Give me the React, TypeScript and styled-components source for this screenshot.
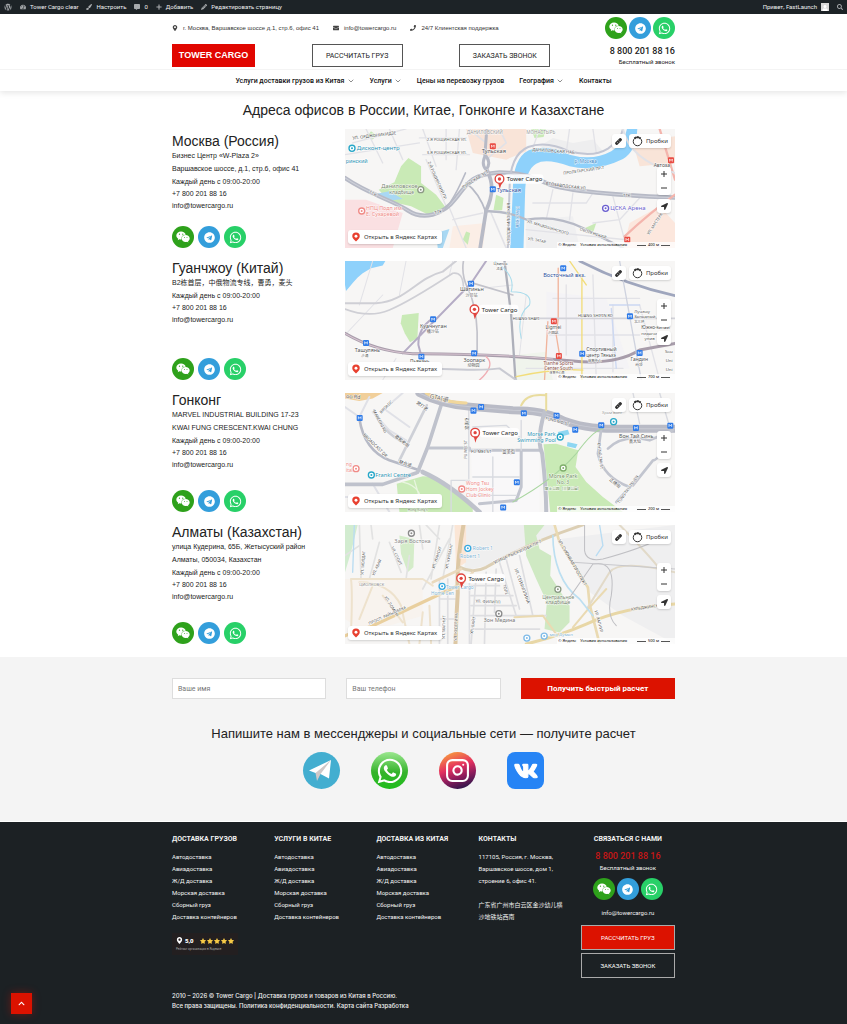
import React from "react";
import styled, { createGlobalStyle } from "styled-components";
import {
  FaWordpress, FaTachometerAlt, FaPaintBrush, FaCommentAlt, FaPlus, FaPencilAlt, FaSearch,
  FaMapMarkerAlt, FaEnvelope, FaPhone, FaWeixin, FaTelegram, FaWhatsapp, FaVk,
  FaChevronUp, FaStar, FaLocationArrow, FaUser,
} from "react-icons/fa";
import { ChevronDown, Instagram } from "lucide-react";

const sans = `"Liberation Sans", Arial, sans-serif`;
const roboto = `Roboto, "Noto Sans CJK SC", sans-serif`;
const noto = `"Noto Sans", "Noto Sans CJK SC", sans-serif`;
const red = "#dc1200";

const Global = createGlobalStyle`
  *, *::before, *::after { box-sizing: border-box; }
  body { margin: 0; background: #fff; color: #222; font-family: "Liberation Sans", Arial, "Noto Sans CJK SC", sans-serif; }
  a { color: inherit; text-decoration: none; }
  h1, h2, h3, p, ul { margin: 0; padding: 0; font-weight: 400; }
  ul { list-style: none; }
  button, input { font: inherit; }
  svg { flex: none; display: block; }
`;

const Wrap = styled.div`
  width: 100%;
  max-width: 503px;
  margin: 0 auto;
`;

/* ---------- admin bar ---------- */
const AdminBar = styled.nav`
  display: flex;
  align-items: center;
  gap: 8px;
  height: 14px;
  padding: 0 4px;
  background: #1d2327;
  color: #f0f0f1;
  font: 6px/14px ${roboto};
`;
const AdminLink = styled.a<{ $end?: boolean }>`
  display: flex;
  align-items: center;
  gap: 4px;
  margin-left: ${(p) => (p.$end ? "auto" : "0")};
  white-space: nowrap;
  svg { color: #a7aaad; }
`;
const Avatar = styled.span`
  display: flex;
  align-items: flex-end;
  justify-content: center;
  width: 8px;
  height: 8px;
  background: #d8d8d8;
  svg { color: #fff; }
`;

/* ---------- header ---------- */
const Header = styled.header`
  background: #fff;
  box-shadow: 0 2px 6px rgba(0, 0, 0, 0.1);
`;
const TopRow = styled.div`
  display: flex;
  align-items: center;
  justify-content: space-between;
  height: 30px;
  padding-bottom: 2px;
`;
const Contacts = styled.ul`
  display: flex;
  gap: 14px;
  font: 6px/12px ${sans};
  color: #333;
`;
const Contact = styled.li`
  display: flex;
  align-items: center;
  gap: 5px;
  svg { color: #444; }
`;
const Socials = styled.div<{ $gap: number; $top?: number }>`
  display: flex;
  gap: ${(p) => p.$gap}px;
  margin-top: ${(p) => p.$top ?? 0}px;
`;
const Social = styled.a<{ $bg: string }>`
  display: flex;
  align-items: center;
  justify-content: center;
  width: 22px;
  height: 22px;
  border-radius: 50%;
  background: ${(p) => p.$bg};
  color: #fff;
`;
const MainRow = styled.div`
  display: flex;
  align-items: center;
  justify-content: space-between;
  height: 25px;
  padding-bottom: 2px;
`;
const Logo = styled.a`
  width: 83px;
  background: #e10600;
  color: #fff;
  text-align: center;
  font: 700 9px/23px ${sans};
`;
const OutlineButton = styled.button`
  width: 91px;
  height: 23px;
  padding: 0;
  border: 1px solid #555;
  background: #fff;
  color: #222;
  font: 7px/20px ${roboto};
`;
const PhoneBlock = styled.div`
  min-width: 68px;
  text-align: right;
  font: 6px/9px ${roboto};
`;
const Phone = styled.a`
  display: block;
  font: 500 9px/12px ${roboto};
`;
const NavBar = styled.nav`
  border-top: 1px solid #f4f4f4;
`;
const NavList = styled.ul`
  display: flex;
  justify-content: center;
  gap: 15px;
  height: 21px;
  font: 500 7px/22px ${roboto};
  color: #111;
`;
const NavLink = styled.a`
  display: flex;
  align-items: center;
  gap: 2px;
`;

/* ---------- offices ---------- */
const Title = styled.h1`
  padding: 10px 0;
  text-align: center;
  font: 14px/18px ${sans};
`;
const Offices = styled(Wrap)`
  display: grid;
  gap: 13px;
  padding-bottom: 13px;
`;
const Office = styled.section`
  display: grid;
  grid-template-columns: 1fr 330px;
  height: 119px;
`;
const Info = styled.div<{ $top: number }>`
  display: flex;
  flex-direction: column;
  justify-content: space-between;
  padding-top: ${(p) => p.$top}px;
`;
const City = styled.h2`
  padding-bottom: 1px;
  font: 14px/14px ${sans};
`;
const Address = styled.p`
  font: 7px/13px "Liberation Sans", "Noto Sans CJK SC", sans-serif;
`;
const Reach = styled.a`
  display: block;
  font: 7px/12px ${sans};
`;

/* ---------- map widget ---------- */
const MapBox = styled.div`
  position: relative;
  overflow: hidden;
  background: #f7f6f5;
  font: 6px/14px ${noto};
  color: #333;
  > svg { width: 100%; height: 100%; }
`;
const MapTools = styled.div`
  position: absolute;
  top: 5px;
  right: 4px;
  display: flex;
  gap: 3px;
`;
const MapSide = styled.div`
  position: absolute;
  top: 38px;
  right: 4px;
  display: grid;
  gap: 4px;
`;
const MapButton = styled.button<{ $pad?: number }>`
  display: flex;
  align-items: center;
  justify-content: center;
  gap: 3px;
  min-width: 14px;
  height: 14px;
  padding: 0 ${(p) => p.$pad ?? 0}px;
  border: 0;
  border-radius: 3px;
  background: #fff;
  color: #333;
  box-shadow: 0 1px 2px rgba(0, 0, 0, 0.15);
`;
const ZoomGroup = styled.div`
  display: grid;
  border-radius: 3px;
  background: #fff;
  box-shadow: 0 1px 2px rgba(0, 0, 0, 0.15);
  ${MapButton} { box-shadow: none; background: none; }
`;
const OpenMap = styled.a`
  position: absolute;
  left: 3px;
  bottom: 4px;
  display: flex;
  align-items: center;
  gap: 3px;
  height: 14px;
  padding: 0 5px 0 3px;
  border-radius: 3px;
  background: #fff;
  box-shadow: 0 1px 2px rgba(0, 0, 0, 0.15);
`;
const Legal = styled.div`
  position: absolute;
  right: 0;
  bottom: 0;
  display: flex;
  gap: 4px;
  padding: 0 5px 0 1px;
  background: rgba(255, 255, 255, 0.75);
  font: 4px/6px ${noto};
  color: #000;
`;
const Scale = styled.span`
  display: flex;
  align-items: center;
  gap: 2px;
  margin-left: 6px;
  &::before, &::after { content: ""; width: 9px; height: 1px; background: #555; }
`;

type Stroke = [d: string, color: string, width: number];
type Area = [d: string, color: string];
type Label = { x: number; y: number; t: string; s?: number; c?: string; r?: number };
type Poi = [x: number, y: number, color: string, kind: "square" | "ring"];
type MapData = {
  name: string; areas: Area[]; roads: Stroke[]; labels: Label[]; pois: Poi[];
  pin: [number, number]; scale: string;
};

const road = "#b7bac6";
const minor = "#e2e2e7";
const green = "#c9eab6";
const water = "#8ed1fb";
const blue = "#2f7be8";
const teal = "#2b93b5";
const rose = "#f08a86";
const blush = "#f9e4d8";

const moscow: MapData = {
  name: "Москва",
  areas: [
    ["M17,230 H80 L190,270 160,375 H17Z", "#fae0e2"],
    ["M380,18 H560 V85 L500,110 400,90Z", blush],
    ["M880,60 L1006,40 V120 L900,130Z", blush],
    ["M340,310 L440,300 430,375 H330Z", "#fbeee6"],
    ["M640,45 L700,60 760,50 790,85 700,95 600,70Z", "#eeeeef"],
    ["M560,290 L700,280 720,375 H560Z", "#f0f0f1"],
    ["M870,300 L960,250 1006,300 V375 H850Z", "#fce7dd"],
    ["M207,105 L245,130 245,180 290,215 320,255 270,277 215,250 150,235 118,200 165,178 185,130Z", green],
    ["M575,18 H620 L612,42 585,45Z", green],
    ["M470,215 L492,225 488,262 462,262Z", green],
    ["M380,325 L392,330 385,365 370,350Z", green],
    ["M95,25 L112,38 100,50 82,42Z", green],
    ["M730,318 L770,300 760,330Z", green],
    ["M112,212 L150,205 190,228 160,232Z", "#a9d8f3"],
    ["M290,330 L330,318 310,375 H295Z", "#a9d8f3"],
    ["M512,375 L520,200 Q520,105 568,82 Q620,62 690,95 Q760,115 815,85 Q855,60 862,18 L893,18 Q890,85 850,108 Q770,148 690,130 Q620,105 590,122 Q560,140 557,200 L552,375Z", water],
  ],
  roads: [
    ["M80,18 L130,120 M17,95 L240,60 M40,60 L200,18 M150,18 L190,110 M250,18 L290,130 M240,45 H380 M250,95 H390 M320,18 V110 M360,18 L350,140 M260,110 L320,250", minor, 4],
    ["M600,18 L580,75 M690,18 L680,90 M760,18 L770,90 M580,240 H740 L760,210 M640,200 L620,290 M700,210 L690,290 M820,220 L860,370 M900,225 L840,290 L760,300 M330,255 L380,375 M340,290 L430,270 M560,320 L860,350", minor, 4],
    ["M480,18 L500,60 L440,110 M390,20 L440,60 M455,270 L500,375", minor, 5],
    ["M17,165 C90,215 160,232 205,262 S310,278 350,225 S400,155 480,148 Q560,150 620,180 T1006,224", road, 13],
    ["M17,165 C90,215 160,232 205,262 S310,278 350,225 S400,155 480,148 Q560,150 620,180 T1006,224", "#cfd1da", 3],
    ["M442,18 L436,100 Q425,125 440,140 Q456,120 440,100", road, 9],
    ["M442,140 C462,180 462,215 440,262 L422,375", road, 11],
    ["M505,375 L510,200 Q510,95 566,72 Q620,52 690,85 Q760,105 805,77 Q845,50 850,18", "#c3c6d3", 6],
    ["M437,265 Q500,262 562,290 Q650,275 730,315 T850,375", road, 7],
    ["M380,180 Q420,210 440,270 M378,150 Q330,260 300,270", road, 5],
    ["M855,340 Q930,270 1006,215 M960,18 L1006,170", "#f4b5ad", 7],
    ["M850,18 Q870,110 1006,150", minor, 6],
  ],
  labels: [
    { x: 40, y: 50, t: "УЛ. ОРДЖОНИКИДЗЕ", s: 13, r: -7 },
    { x: 52, y: 82, t: "Дисконт-центр", s: 18, c: teal },
    { x: 19, y: 121, t: "ринский", s: 16, c: teal },
    { x: 382, y: 32, t: "ДАНИЛОВСКИЙ", s: 14, c: "#9a9a9a" },
    { x: 560, y: 32, t: "МОНАСТЫРЬ", s: 14, c: "#9a9a9a" },
    { x: 262, y: 54, t: "2-Я РОЩИНСКАЯ УЛ.", s: 12 },
    { x: 262, y: 93, t: "3-Я РОЩИНСКАЯ УЛ.", s: 12 },
    { x: 427, y: 91, t: "Тульская", s: 17 },
    { x: 472, y: 206, t: "Тульская", s: 17, c: "#2b4f9c" },
    { x: 126, y: 196, t: "Даниловское", s: 17, c: "#7b8874" },
    { x: 150, y: 214, t: "кладбище", s: 15, c: "#7b8874" },
    { x: 80, y: 261, t: "НПЦ Подп им.", s: 16, c: rose },
    { x: 80, y: 280, t: "Е. Сухаревой", s: 16, c: rose },
    { x: 265, y: 118, t: "2-Й РОЩИНСКИЙ ПР.", s: 12, r: 66 },
    { x: 372, y: 198, t: "ТУЛЬСКАЯ ЭСТ", s: 13, r: -33 },
    { x: 578, y: 84, t: "ДАНИЛОВСКАЯ НАБ.", s: 13, r: 4 },
    { x: 705, y: 120, t: "р. Москва", s: 14, c: "#3f88c4" },
    { x: 672, y: 155, t: "ПРОЛЕТАРСКИЙ ПР-Т", s: 12, r: -8 },
    { x: 618, y: 186, t: "ВТОЗАВОДСКАЯ УЛ.", s: 13, r: 7 },
    { x: 850, y: 222, t: "ТТК", s: 13 },
    { x: 88, y: 212, t: "ТТК", s: 13, r: 25 },
    { x: 287, y: 275, t: "ТТК", s: 13, r: -18 },
    { x: 812, y: 262, t: "ЦСКА Арена", s: 18, c: "#6b5fd0" },
    { x: 942, y: 131, t: "Автоза", s: 15 },
    { x: 528, y: 250, t: "Р. МОСКВА", s: 12, r: 90, c: "#3f88c4" },
    { x: 512, y: 365, t: "НОВОДАНИЛОВСКАЯ", s: 12, r: -90 },
    { x: 562, y: 298, t: "УЛ. МАЦЮШИНСКОГО", s: 12, r: 17 },
    { x: 565, y: 350, t: "УЛ. ТАТАР", s: 12, r: 12 },
    { x: 720, y: 322, t: "ОБОЛЕНСКИЙ", s: 12, r: 18 },
    { x: 928, y: 335, t: "УЛ. МАСТЕРК", s: 12, r: -56 },
  ],
  pois: [[38, 76, "#27a7c8", "ring"], [244, 200, "#8b9a84", "ring"], [67, 264, rose, "ring"], [798, 256, "#6b5fd0", "ring"], [460, 199, blue, "square"], [460, 70, "#e94b43", "square"], [863, 350, "#e94b43", "square"], [994, 112, "#e94b43", "square"]],
  pin: [480, 168],
  scale: "400 м",
};

const guangzhou: MapData = {
  name: "Гуанчжоу",
  areas: [
    ["M17,18 H138 L130,32 95,40 70,55 55,68 42,82 20,108 17,90Z", water],
    ["M188,180 L238,174 234,250 212,262 196,235 184,205Z", green],
    ["M620,110 L800,130 870,340 620,350Z", "#f4f3f6"],
    ["M530,300 L620,290 640,375 H530Z", "#f0f4ec"],
  ],
  roads: [
    ["M100,18 L60,150 M200,18 L180,120 M17,240 L130,120 M130,375 L170,310 M340,18 L330,60 M430,100 L520,90 M560,120 L540,300", minor, 3],
    ["M640,130 H900 M680,90 V300 M760,60 L770,375 M820,150 V350 M630,240 H900 M560,340 H850 M900,150 L960,375", minor, 4],
    ["M810,150 H900 M815,160 L830,340", "#ccd8f2", 4],
    ["M17,145 H110 C200,140 230,70 310,50 L350,18", "#cfcfd5", 6],
    ["M17,162 Q90,190 150,165 T340,55 Q370,50 372,95", "#cfcfd5", 5],
    ["M372,18 Q365,60 385,100 Q410,150 413,230 V300 M385,80 L520,120", "#c3c3cb", 5],
    ["M440,18 L395,85 L190,295 M280,190 Q235,220 237,270 L245,300", "#b5acc5", 6],
    ["M17,235 Q110,290 220,296 Q450,295 700,318 Q830,330 900,285 L1006,265", "#a89dab", 9],
    ["M17,235 Q110,290 220,296 Q450,295 640,312", "#d9c5d2", 3],
    ["M495,18 L515,180 L528,375", "#aeb0ba", 7],
    ["M440,305 Q470,330 420,375", "#f0aeb4", 4],
    ["M185,335 Q420,350 480,340 L530,375", "#c9cad2", 6],
    ["M465,18 Q530,60 515,110 Q580,110 570,150 Q530,180 545,250", "#a9dcec", 3],
    ["M656,40 V190 L650,240 L660,300", "#f1b49c", 4],
    ["M625,200 L615,375", "#f1b49c", 4],
    ["M727,60 V375 M690,18 L740,90", "#f2dd7a", 4],
    ["M530,365 Q640,340 730,345", "#f2dd7a", 4],
    ["M520,190 H1006", "#d2d2d9", 5],
    ["M720,18 Q860,90 1006,122", "#9fa6bd", 8],
    ["M840,18 L905,375", "#cfd3df", 4],
  ],
  labels: [
    { x: 462, y: 30, t: "Цзинса", s: 12 }, { x: 470, y: 44, t: "泾溪", s: 10 },
    { x: 362, y: 109, t: "Шатиньн", s: 16 }, { x: 378, y: 125, t: "沙贝站", s: 12 },
    { x: 242, y: 218, t: "Куачнуган", s: 16 }, { x: 262, y: 234, t: "横沙站", s: 12 },
    { x: 46, y: 290, t: "Ташулянь", s: 16 }, { x: 65, y: 305, t: "沙涌", s: 11 },
    { x: 212, y: 323, t: "Пьянань", s: 14 },
    { x: 372, y: 321, t: "Зоопарк", s: 16 }, { x: 384, y: 337, t: "动物园", s: 12 },
    { x: 611, y: 66, t: "Восточный вкз.", s: 17, c: "#2b4f9c" },
    { x: 520, y: 194, t: "HUANG SHAYI", s: 12 }, { x: 715, y: 187, t: "HUANG SHIYIN RD", s: 12 },
    { x: 618, y: 223, t: "Ligmei", s: 15 }, { x: 624, y: 238, t: "沙园站", s: 11 },
    { x: 612, y: 329, t: "Tianhe Sports", s: 14, c: "#8a5148" }, { x: 614, y: 345, t: "Center South", s: 14, c: "#8a5148" }, { x: 630, y: 358, t: "体育中心南", s: 9 },
    { x: 740, y: 289, t: "Спортивный", s: 15 }, { x: 740, y: 306, t: "центр Тяньхэ", s: 14 }, { x: 745, y: 320, t: "体育中心", s: 10 },
    { x: 884, y: 175, t: "Лучжоу", s: 13 }, { x: 884, y: 190, t: "Западный", s: 13 }, { x: 884, y: 204, t: "北三环", s: 10 },
    { x: 905, y: 223, t: "Южно-китай", s: 14 }, { x: 905, y: 239, t: "педагог", s: 13 }, { x: 915, y: 254, t: "унив", s: 13 },
    { x: 873, y: 318, t: "Гандин", s: 15 }, { x: 887, y: 333, t: "岗顶", s: 11 },
    { x: 976, y: 295, t: "Sou", s: 13 }, { x: 978, y: 322, t: "Uni", s: 13 }, { x: 978, y: 349, t: "Uni", s: 13 },
  ],
  pois: [[395, 86, blue, "square"], [281, 193, blue, "square"], [80, 264, blue, "square"], [246, 305, blue, "square"], [404, 295, blue, "square"], [671, 40, blue, "square"], [643, 199, "#e94b43", "square"], [658, 303, "#e94b43", "square"], [728, 296, blue, "square"], [871, 184, blue, "square"], [900, 294, blue, "square"]],
  pin: [405, 163],
  scale: "700 м",
};

const hongkong: MapData = {
  name: "Гонконг",
  areas: [
    ["M17,18 H130 L100,35 60,42 17,35Z", "#f1cf9a"],
    ["M172,290 L250,268 290,270 360,320 410,375 H180Z", green],
    ["M612,172 L650,170 716,190 708,240 740,285 790,330 850,375 H632Z", green],
    ["M655,135 L685,128 690,142 660,150Z", "#8ed6f2"],
    ["M684,165 L714,172 708,184 682,178Z", "#8ed6f2"],
    ["M395,195 H600 V375 H400Z", "#f9f8f9"],
  ],
  roads: [
    ["M60,90 L90,30 M130,70 L190,18 M17,60 L60,90 M140,70 L210,120 M100,75 L150,130 L200,160 M17,330 H170 M100,290 L150,375", "#e0e1e7", 6],
    ["M60,95 Q75,190 150,220 L240,250", road, 8],
    ["M262,55 L180,220 M105,70 Q120,130 205,175", "#ced0d7", 8],
    ["M305,55 L265,180 L235,255 M17,292 H130 L230,258", "#bfc2cc", 11],
    ["M270,183 H390 M390,190 H605 M545,190 V300 L530,340 L420,350", "#c2c5cf", 9],
    ["M250,255 Q330,290 420,375", "#bfc2cc", 14],
    ["M388,60 V275 M335,280 H390 M335,280 V375 M460,210 V375 M400,270 H540 M545,100 V190 M400,120 L500,115 L540,150 M400,325 H530", "#d8dae0", 4],
    ["M240,18 Q310,55 400,60 L520,70 Q610,70 660,95 T800,125 L1006,125", "#b9bbc6", 24],
    ["M240,18 Q310,55 400,60 L520,70 Q610,70 660,95 T800,125 L1006,125", "#c9cbd4", 3],
    ["M615,75 Q590,160 608,200 Q620,300 620,375", "#bfc2cc", 12],
    ["M260,18 Q300,45 380,48", "#f1d79c", 9],
    ["M545,55 Q560,18 620,25 M620,18 V70", "#e9dc9e", 6],
    ["M785,125 L775,200 Q790,270 870,300 M805,185 Q850,140 930,160 L1000,130 M880,290 L830,345 M990,140 Q960,220 940,220 L880,295", "#c2c5cf", 8],
    ["M520,345 Q640,280 710,200 Q760,130 790,125", "#a9d6a0", 3],
    ["M190,285 Q260,300 240,375 M225,280 L240,330", "#e8f5df", 4],
    ["M880,18 L900,110 M960,18 L990,120", "#d8dae0", 4],
  ],
  labels: [
    { x: 20, y: 33, t: "oo Rd", s: 16, r: 4 },
    { x: 270, y: 33, t: "GTAI道", s: 18, r: 12, c: "#666" },
    { x: 126, y: 80, t: "BROADC", s: 12, r: -45 },
    { x: 100, y: 72, t: "MARCONI RD", s: 12, r: 62 },
    { x: 70, y: 145, t: "BROADCAST DR", s: 13, r: 44 },
    { x: 165, y: 150, t: "歌和老街", s: 13, r: 38 }, { x: 230, y: 50, t: "窝打老", s: 13, r: 35 },
    { x: 178, y: 228, t: "联合道", s: 13, r: 18 },
    { x: 384, y: 215, t: "FU MEI ST", s: 12, r: -90 }, { x: 388, y: 128, t: "富美街", s: 12, r: -90 },
    { x: 395, y: 198, t: "FU MEI ST", s: 13 }, { x: 488, y: 199, t: "富美街", s: 13 },
    { x: 108, y: 270, t: "Frankl Centre", s: 17, c: teal },
    { x: 20, y: 237, t: "ng", s: 14, c: rose }, { x: 20, y: 254, t: "ital", s: 14, c: rose },
    { x: 380, y: 295, t: "Wong Tsu", s: 15, c: rose }, { x: 380, y: 312, t: "Hom Jockey", s: 15, c: rose }, { x: 380, y: 329, t: "Club Clinic", s: 15, c: rose },
    { x: 563, y: 147, t: "Morse Park", s: 16, c: teal }, { x: 533, y: 166, t: "Swimming Pool", s: 16, c: teal },
    { x: 628, y: 274, t: "Morse Park", s: 16, c: "#6f8d60" }, { x: 652, y: 292, t: "No. 3", s: 15, c: "#6f8d60" }, { x: 616, y: 308, t: "摩士公园（三號公園）", s: 11, c: "#6f8d60" },
    { x: 838, y: 153, t: "Вон Тай Синь", s: 16 }, { x: 868, y: 169, t: "黄大仙", s: 12 },
    { x: 787, y: 82, t: "Храм Вонг", s: 12, c: "#999" },
    { x: 774, y: 168, t: "CHING TAK ST", s: 12, r: 84 }, { x: 808, y: 280, t: "正德街", s: 13, r: 38 },
    { x: 840, y: 350, t: "TUNG TAU TSUEN", s: 12, r: -55 },
    { x: 617, y: 98, t: "FUNG MO ST", s: 12, r: 14 },
    { x: 205, y: 371, t: "Hong Kong's", s: 10, c: "#6f8d60" },
  ],
  pois: [[61, 93, blue, "square"], [402, 71, blue, "square"], [425, 60, blue, "square"], [553, 79, blue, "square"], [651, 86, blue, "square"], [707, 128, blue, "square"], [785, 115, blue, "square"], [889, 123, blue, "square"], [992, 116, blue, "square"], [532, 286, blue, "square"], [491, 361, blue, "square"], [96, 264, "#27a7c8", "ring"], [50, 245, rose, "ring"], [367, 306, rose, "ring"], [662, 150, "#27a7c8", "ring"], [822, 104, "#27a7c8", "ring"], [671, 243, "#7fae6b", "ring"]],
  pin: [407, 137],
  scale: "200 м",
};

const almaty: MapData = {
  name: "Алматы",
  areas: [
    ["M380,18 H640 L650,50 440,140 375,155Z", "#efefef"],
    ["M660,60 L1006,18 V375 L850,290 745,215Z", "#efeff0"],
    ["M17,180 H250 V290 L80,340 17,300Z", "#f8f3ee"],
    ["M17,18 H55 L35,100 17,160Z", "#d2ecd0"],
    ["M180,50 L225,60 222,145 205,160 185,105Z", "#d4ecc9"],
    ["M553,18 H615 L590,50 600,90 635,110 632,170 690,260 690,310 660,340 615,330 622,250 590,180 560,110Z", "#cfe9c3"],
    ["M345,18 H380 V130 L350,150Z", "#fbe6d6"],
  ],
  roads: [
    ["M60,18 L65,180 M95,18 L100,60 M150,70 L185,160 M120,70 L90,180 M17,110 L60,80 M300,18 L275,180 M340,18 L310,180 M260,18 L300,60 M330,60 L250,210 M210,110 L200,180 M240,18 L250,90", "#e2e2e2", 5],
    ["M300,180 V375 M325,180 V375 M390,170 V375 M410,170 L395,375 M440,160 L435,375 M470,150 L465,280 M480,130 L530,290 M500,120 L540,270 M540,110 L580,290 M395,200 H480 M395,230 H520 M395,260 H530 M395,290 H620 M400,330 H600 M300,240 H350 M300,300 H350", "#dedee1", 5],
    ["M35,180 Q40,220 35,340 M35,180 H250 L280,200 M60,190 Q150,190 185,260 L210,375 M130,230 L190,310 M100,200 L60,300 M250,280 L240,375 M270,260 L275,375", "#eee2cd", 6],
    ["M17,350 L100,320 Q270,240 355,200", "#e9cf9e", 10],
    ["M372,18 Q350,140 355,220 Q350,300 348,375", "#ddc8a5", 12],
    ["M362,145 Q400,165 440,145 Q560,75 730,18", "#dccfb4", 9],
    ["M365,150 L280,190 M355,205 L400,160", "#ead9bc", 8],
    ["M645,18 L660,70 L745,205 L750,255 L780,375", "#eadab2", 8],
    ["M840,18 Q930,110 960,150 M745,265 L810,160 Q840,120 1006,160", "#e2dac9", 6],
    ["M560,375 Q660,350 740,315 Q850,265 1006,255", "#e8d7a6", 9],
    ["M525,295 L610,290 L650,345 M700,325 L750,265 L800,210", "#eadab2", 6],
    ["M640,50 Q640,110 660,160 T720,240 L760,290", "#bcdff1", 5],
    ["M780,18 L790,80 L770,110 M45,18 L40,160", "#b9dcf2", 4],
    ["M735,18 V95 Q740,130 790,120 Q900,90 960,60 M680,250 L760,135 Q830,120 815,230 Q800,290 830,320", "#bfbfc3", 3],
    ["M700,130 L1006,150", "#c8c8cc", 3],
  ],
  labels: [
    { x: 165, y: 71, t: "Заря Востока", s: 17, c: "#8a8a8a" },
    { x: 400, y: 92, t: "Robert 1", s: 15, c: "#7fb4d6" }, { x: 362, y: 117, t: "Robert 1", s: 15, c: "#7fb4d6" },
    { x: 320, y: 209, t: "Tower Cargo", s: 14, c: "#7fb4d6" }, { x: 275, y: 228, t: "Home Cen", s: 14, c: "#7fb4d6" },
    { x: 608, y: 239, t: "Центральное", s: 15, c: "#7b8874" }, { x: 618, y: 256, t: "кладбище", s: 15, c: "#7b8874" },
    { x: 433, y: 310, t: "Зон Медина", s: 16, c: "#777" },
    { x: 465, y: 135, t: "УЛИЦА РЫСКУЛОВА ПР-Т", s: 13, r: -24 },
    { x: 90, y: 318, t: "ПРОСП. РАЙЫМБЕКА", s: 12, r: -24 },
    { x: 352, y: 365, t: "УЛ. КУДЕРИНА", s: 12, r: -88 }, { x: 316, y: 360, t: "УЛ. МАГНИТ", s: 12, r: -88 },
    { x: 72, y: 168, t: "УЛ. МОЛДАГ", s: 12, r: -85 }, { x: 105, y: 170, t: "УЛ. АБАЯ", s: 12, r: -65 },
    { x: 155, y: 85, t: "УЛ. СПОРТ", s: 12, r: 65 }, { x: 285, y: 150, t: "УЛ. ЖАНСУГ", s: 12, r: -72 },
    { x: 325, y: 150, t: "УЛ. КУРМАНГ", s: 12, r: -78 }, { x: 525, y: 150, t: "УЛ. СЕЙФУЛЛИНА", s: 13, r: 70 },
    { x: 408, y: 250, t: "УЛ. ФИЛИПП", s: 12, r: 3 }, { x: 490, y: 198, t: "ТОЛЕ", s: 12, r: 75 },
    { x: 655, y: 65, t: "УЛ. СУЮНБАЯ ПРОСПЕКТ", s: 13, r: 60 }, { x: 60, y: 202, t: "ЦИОЛКОВСК", s: 12, c: "#888" },
    { x: 875, y: 275, t: "КУЛЬДЖИНСК", s: 12, r: -8 }, { x: 135, y: 235, t: "УЛ. ЛОМОН", s: 12, r: 58 },
    { x: 400, y: 345, t: "УЛ. БАЙТ", s: 12, r: -80 }, { x: 765, y: 275, t: "УЛ. ХАЛИУЛ", s: 12, r: 75 },
    { x: 630, y: 350, t: "мкр Думан", s: 13, c: "#7fb4d6" },
  ],
  pois: [[216, 43, "#8a8a8a", "ring"], [385, 88, "#37a9e0", "ring"], [308, 202, "#37a9e0", "ring"], [655, 211, "#8b9a84", "ring"], [478, 284, "#8a8a8a", "ring"], [562, 357, "#7fbbe8", "ring"], [614, 351, "#7fbbe8", "ring"]],
  pin: [365, 178],
  scale: "500 м",
};

function Pin({ size }: { size: number }) {
  return (
    <svg width={size} height={size} viewBox="0 0 24 24">
      <path d="M12 1a9 9 0 0 0-9 9c0 6 5 8 9 13 4-5 9-7 9-13a9 9 0 0 0-9-9z" fill="#e8402f" />
      <circle cx="12" cy="10" r="3.5" fill="#fff" />
    </svg>
  );
}

function MapView({ data }: { data: MapData }) {
  const [px, py] = data.pin;
  return (
    <MapBox>
      <svg viewBox="17 18 989 357" preserveAspectRatio="xMidYMid slice" role="img" aria-label={data.name}>
        {data.areas.map(([d, c], i) => <path key={i} d={d} fill={c} />)}
        {data.roads.map(([d, c, w], i) => (
          <path key={i} d={d} fill="none" stroke={c} strokeWidth={w} strokeLinecap="round" strokeLinejoin="round" />
        ))}
        {data.pois.map(([x, y, c, k], i) =>
          k === "square" ? (
            <g key={i}>
              <rect x={x - 9} y={y - 9} width="18" height="18" rx="3" fill={c} />
              <path d={`M${x - 4},${y + 4} V${y - 4} L${x},${y + 1} L${x + 4},${y - 4} V${y + 4}`} fill="none" stroke="#fff" strokeWidth="2" />
            </g>
          ) : (
            <g key={i}>
              <circle cx={x} cy={y} r="9" fill="#fff" stroke={c} strokeWidth="4" />
              <circle cx={x} cy={y} r="3" fill={c} />
            </g>
          )
        )}
        {data.labels.map((l, i) => (
          <text
            key={i} x={l.x} y={l.y} fontSize={l.s} fill={l.c ?? "#555"} fontFamily={noto}
            stroke="#fff" strokeWidth="3" strokeOpacity="0.8" paintOrder="stroke"
            transform={l.r ? `rotate(${l.r} ${l.x} ${l.y})` : undefined}
          >
            {l.t}
          </text>
        ))}
        <rect x={px + 14} y={py - 14} width="118" height="28" rx="10" fill="#fff" fillOpacity="0.9" />
        <path d={`M${px + 11},${py + 10} Q${px + 4},${py + 16} ${px + 1},${py + 30} L${px - 4},${py + 12}Z`} fill="#e0443e" />
        <circle cx={px} cy={py} r="13" fill="#fff" stroke="#e0443e" strokeWidth="4" />
        <circle cx={px} cy={py} r="5" fill="#e0443e" />
        <text x={px + 22} y={py + 7} fontSize="18" fill="#222" fontFamily={noto}>Tower Cargo</text>
      </svg>
      <MapTools>
        <MapButton aria-label="Линейка">
          <svg width="9" height="9" viewBox="0 0 18 18">
            <rect x="1" y="6" width="16" height="6" rx="2" fill="#333" transform="rotate(-45 9 9)" />
            <path d="M6 10l2 2M9 7l2 2" stroke="#fff" strokeWidth="1" />
          </svg>
        </MapButton>
        <MapButton $pad={3}>
          <svg width="11" height="11" viewBox="0 0 22 22" fill="none" stroke="#333">
            <circle cx="11" cy="11" r="8.5" strokeWidth="2" />
            <path d="M5 5a8.500 8.500 0 0 1 12 0" strokeWidth="4" strokeDasharray="4 1" />
          </svg>
          Пробки
        </MapButton>
      </MapTools>
      <MapSide>
        <ZoomGroup>
          <MapButton aria-label="Приблизить">
            <svg width="6" height="6" viewBox="0 0 6 6" stroke="#333"><path d="M3 0v6M0 3h6" /></svg>
          </MapButton>
          <MapButton aria-label="Отдалить">
            <svg width="6" height="6" viewBox="0 0 6 6" stroke="#333"><path d="M0 3h6" /></svg>
          </MapButton>
        </ZoomGroup>
        <MapButton aria-label="Моё местоположение"><FaLocationArrow size={7} /></MapButton>
      </MapSide>
      <OpenMap href="#"><Pin size={10} />Открыть в Яндекс Картах</OpenMap>
      <Legal><span>© Яндекс</span><a href="#">Условия использования</a><Scale>{data.scale}</Scale></Legal>
    </MapBox>
  );
}

const offices = [
  { city: "Москва (Россия)", lines: ["Бизнес Центр «W-Plaza 2»", "Варшавское шоссе, д.1, стр.6, офис 41"], map: moscow },
  { city: "Гуанчжоу (Китай)", lines: ["B2栋首层，中俄物流专线，曹勇，麦头"], map: guangzhou },
  { city: "Гонконг", lines: ["MARVEL INDUSTRIAL BUILDING 17-23", "KWAI FUNG CRESCENT.KWAI CHUNG"], map: hongkong },
  { city: "Алматы (Казахстан)", lines: ["улица Кудерина, 65Б, Жетысуский район", "Алматы, 050034, Казахстан"], map: almaty },
];

function SocialRow({ gap, top }: { gap: number; top?: number }) {
  return (
    <Socials $gap={gap} $top={top}>
      <Social href="#" $bg="#2ea11b" aria-label="WeChat"><FaWeixin size={14} /></Social>
      <Social href="#" $bg="#339edb" aria-label="Telegram"><FaTelegram size={11} /></Social>
      <Social href="#" $bg="#28d068" aria-label="WhatsApp"><FaWhatsapp size={13} /></Social>
    </Socials>
  );
}

/* ---------- request form and messengers ---------- */
const Request = styled.section`
  height: 164px;
  padding-top: 21px;
  background: #f4f4f4;
`;
const Form = styled.form`
  display: grid;
  grid-template-columns: repeat(3, 1fr);
  gap: 20px;
`;
const Field = styled.input`
  width: 100%;
  height: 21px;
  padding: 0 5px;
  border: 1px solid #ddd;
  background: #fff;
  font: 7px/18px ${roboto};
  &::placeholder { color: #777; }
`;
const Submit = styled.button`
  height: 21px;
  padding: 0;
  border: 0;
  background: ${red};
  color: #fff;
  font: 700 8px/21px ${roboto};
`;
const Invite = styled.h2`
  padding-top: 26px;
  text-align: center;
  font: 13px/18px ${sans};
`;
const Messengers = styled.div`
  display: flex;
  justify-content: center;
  gap: 31px;
  padding-top: 9px;
`;
const Messenger = styled.a<{ $bg: string; $square?: boolean }>`
  display: flex;
  align-items: center;
  justify-content: center;
  width: 37px;
  height: 37px;
  border-radius: ${(p) => (p.$square ? "8px" : "50%")};
  background: ${(p) => p.$bg};
  color: #fff;
`;

/* ---------- footer ---------- */
const Footer = styled.footer`
  min-height: 203px;
  padding: 12px 0 13px;
  border-top: 1px solid #fff;
  background: #1c2124;
  color: #f2f2f2;
  font: 6px/12px ${roboto};
`;
const Columns = styled.div`
  display: grid;
  grid-template-columns: repeat(5, 1fr);
  gap: 8px;
  height: 148px;
`;
const Column = styled.div<{ $center?: boolean }>`
  display: flex;
  flex-direction: column;
  align-items: ${(p) => (p.$center ? "center" : "flex-start")};
  white-space: nowrap;
`;
const ColumnTitle = styled.h3`
  padding-bottom: 6px;
  font: 700 7px/11px ${roboto};
`;
const Rating = styled.a`
  display: grid;
  width: 66px;
  margin-top: 10px;
  padding: 2px 4px;
  background: #231f20;
  font: 3px/7px ${roboto};
  color: #aaa;
`;
const Stars = styled.span`
  display: flex;
  align-items: center;
  gap: 1px;
  font: 700 6px/11px ${roboto};
  color: #fff;
  b { margin: 0 5px 0 1px; }
`;
const FooterPhone = styled.a`
  font: 500 9px/11px ${roboto};
  color: #c81616;
`;
const Small = styled.span<{ $h: number }>`
  line-height: ${(p) => p.$h}px;
`;
const FooterButton = styled.button<{ $fill?: boolean }>`
  width: 100%;
  height: 25px;
  margin-bottom: 3px;
  padding: 0;
  border: 1px solid #aaa;
  background: ${(p) => (p.$fill ? red : "transparent")};
  color: #fff;
  font: 6px/23px ${roboto};
`;
const Legals = styled.p`
  padding-top: 9px;
  font: 500 6px/10px Inter, ${roboto};
`;
const ToTop = styled.button`
  position: fixed;
  left: 11px;
  bottom: 10px;
  display: flex;
  align-items: center;
  justify-content: center;
  width: 21px;
  height: 21px;
  padding: 0;
  border: 0;
  background: ${red};
  color: #fff;
  box-shadow: 0 0 8px rgba(220, 18, 0, 0.4);
`;

const nav = [
  ["Услуги доставки грузов из Китая", true], ["Услуги", true], ["Цены на перевозку грузов", false],
  ["География", true], ["Контакты", false],
] as const;
const deliveries = ["Автодоставка", "Авиадоставка", "Ж/Д доставка", "Морская доставка", "Сборный груз", "Доставка контейнеров"];

export default function App() {
  return (
    <>
      <Global />
      <AdminBar>
        <AdminLink href="#" aria-label="WordPress"><FaWordpress size={8} /></AdminLink>
        <AdminLink href="#"><FaTachometerAlt size={6} />Tower Cargo clear</AdminLink>
        <AdminLink href="#"><FaPaintBrush size={6} />Настроить</AdminLink>
        <AdminLink href="#"><FaCommentAlt size={6} />0</AdminLink>
        <AdminLink href="#"><FaPlus size={6} />Добавить</AdminLink>
        <AdminLink href="#"><FaPencilAlt size={6} />Редактировать страницу</AdminLink>
        <AdminLink href="#" $end>Привет, FastLaunch<Avatar><FaUser size={6} /></Avatar></AdminLink>
        <AdminLink href="#" aria-label="Поиск"><FaSearch size={6} /></AdminLink>
      </AdminBar>

      <Header>
        <Wrap>
          <TopRow>
            <Contacts>
              <Contact><FaMapMarkerAlt size={6} />г. Москва, Варшавское шоссе д.1, стр.6, офис 41</Contact>
              <Contact><FaEnvelope size={6} /><a href="#">info@towercargo.ru</a></Contact>
              <Contact><FaPhone size={6} />24/7 Клиентская поддержка</Contact>
            </Contacts>
            <SocialRow gap={2} />
          </TopRow>
          <MainRow>
            <Logo href="#">TOWER CARGO</Logo>
            <OutlineButton>РАССЧИТАТЬ ГРУЗ</OutlineButton>
            <OutlineButton>ЗАКАЗАТЬ ЗВОНОК</OutlineButton>
            <PhoneBlock><Phone href="#">8 800 201 88 16</Phone>Бесплатный звонок</PhoneBlock>
          </MainRow>
        </Wrap>
        <NavBar>
          <NavList>
            {nav.map(([t, more]) => (
              <li key={t}><NavLink href="#">{t}{more && <ChevronDown size={8} color="#555" strokeWidth={2} />}</NavLink></li>
            ))}
          </NavList>
        </NavBar>
      </Header>

      <main>
        <Title>Адреса офисов в России, Китае, Гонконге и Казахстане</Title>
        <Offices>
          {offices.map((o, i) => (
            <Office key={o.city}>
              <Info $top={i === 0 ? 5 : 0}>
                <div>
                  <City>{o.city}</City>
                  {o.lines.map((l) => <Address key={l}>{l}</Address>)}
                  <Address>Каждый день с 09:00-20:00</Address>
                  <Reach href="#">+7 800 201 88 16</Reach>
                  <Reach href="#">info@towercargo.ru</Reach>
                </div>
                <SocialRow gap={4} />
              </Info>
              <MapView data={o.map} />
            </Office>
          ))}
        </Offices>

        <Request>
          <Wrap>
            <Form>
              <Field aria-label="Ваше имя" placeholder="Ваше имя" />
              <Field aria-label="Ваш телефон" placeholder="Ваш телефон" />
              <Submit type="button">Получить быстрый расчет</Submit>
            </Form>
            <Invite>Напишите нам в мессенджеры и социальные сети — получите расчет</Invite>
            <Messengers>
              <Messenger href="#" $bg="#43aed0" aria-label="Telegram">
                <svg width="37" height="37" viewBox="0 0 37 37">
                  <path d="M6 18.500L28 8l-2 18.500-8.500-4.500-5-1z" fill="#fff" />
                  <path d="M12.500 21L28 8 17.500 22l-3.500 7z" fill="#cfc8c8" />
                </svg>
              </Messenger>
              <Messenger href="#" $bg="linear-gradient(#9be78f, #35b32b 55%, #20bd1c)" aria-label="WhatsApp"><FaWhatsapp size={28} /></Messenger>
              <Messenger href="#" $bg="linear-gradient(160deg, #f9a13c 5%, #e4305f 42%, #8d1c5c 65%, #1d1548 95%)" aria-label="Instagram"><Instagram size={25} strokeWidth={2} /></Messenger>
              <Messenger href="#" $bg="#2684f5" $square aria-label="VK"><FaVk size={24} stroke="#fff" strokeWidth={26} /></Messenger>
            </Messengers>
          </Wrap>
        </Request>
      </main>

      <Footer>
        <Wrap>
          <Columns>
            {["ДОСТАВКА ГРУЗОВ", "УСЛУГИ В КИТАЕ", "ДОСТАВКА ИЗ КИТАЯ"].map((t, i) => (
              <Column key={t}>
                <ColumnTitle>{t}</ColumnTitle>
                <ul>{deliveries.map((d) => <li key={d}><a href="#">{d}</a></li>)}</ul>
                {i === 0 && (
                  <Rating href="#">
                    <Stars>
                      <FaMapMarkerAlt size={7} /><b>5,0</b>
                      {[0, 1, 2, 3, 4].map((n) => <FaStar key={n} size={6} color="#f6c945" />)}
                    </Stars>
                    Рейтинг организации в Яндексе
                  </Rating>
                )}
              </Column>
            ))}
            <Column>
              <ColumnTitle>КОНТАКТЫ</ColumnTitle>
              <p>117105, Россия, г. Москва,<br />Варшавское шоссе, дом 1,<br />строение 6, офис 41.</p>
              <p><br />广东省广州市白云区金沙幼儿横<br />沙地铁站西南</p>
            </Column>
            <Column $center>
              <ColumnTitle>СВЯЗАТЬСЯ С НАМИ</ColumnTitle>
              <FooterPhone href="#">8 800 201 88 16</FooterPhone>
              <Small $h={11}>Бесплатный звонок</Small>
              <SocialRow gap={2} top={5} />
              <Small $h={25}>info@towercargo.ru</Small>
              <FooterButton $fill>РАССЧИТАТЬ ГРУЗ</FooterButton>
              <FooterButton>ЗАКАЗАТЬ ЗВОНОК</FooterButton>
            </Column>
          </Columns>
          <Legals>
            2010 – 2026 © Tower Cargo | Доставка грузов и товаров из Китая в Россию.<br />
            Все права защищены. <a href="#">Политика конфиденциальности.</a> <a href="#">Карта сайта</a> <a href="#">Разработка</a>
          </Legals>
        </Wrap>
      </Footer>
      <ToTop aria-label="Наверх"><FaChevronUp size={7} /></ToTop>
    </>
  );
}
